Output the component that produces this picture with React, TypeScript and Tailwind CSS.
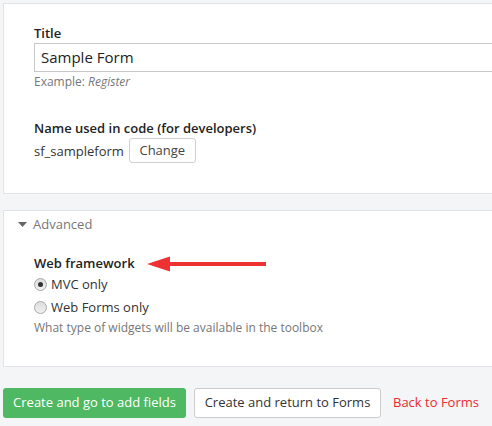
import React from "react";

function Radio({ checked }: { checked?: boolean }) {
  return (
    <span className="w-[13px] h-[13px] rounded-full border border-[#a9a9a9] bg-[linear-gradient(#dcdcdc,#f0f0f0)] flex items-center justify-center shrink-0">
      {checked && <span className="w-[5px] h-[5px] rounded-full bg-[#333]" />}
    </span>
  );
}

export default function App() {
  return (
    <div
      className="w-[492px] h-[426px] overflow-hidden bg-[#f4f5f7] pt-[3px] pl-[3px] text-[#333]"
      style={{ fontFamily: '"Open Sans", sans-serif' }}
    >
      <div className="bg-white border-y border-l border-[#e1e3e6] pt-[20px] pb-[30px] pl-[30px] w-[600px]">
        <div className="text-[13px] leading-[18px] font-semibold text-[#222]">Title</div>
        <div className="mt-[1px] h-[29px] border border-[#c8c8c8] flex items-center pl-[6px] text-[15px] text-[#222]">
          Sample Form
        </div>
        <div className="text-[12px] leading-[17px] text-[#777] mt-[1px]">
          Example: <i>Register</i>
        </div>
        <div className="mt-[29px] text-[13px] leading-[18px] font-semibold text-[#222]">
          Name used in code (for developers)
        </div>
        <div className="flex items-center mt-[1px]">
          <span className="text-[13px] leading-[18px] text-[#333]">sf_sampleform</span>
          <button className="ml-[5px] h-[25px] w-[67px] border border-[#cfcfcf] rounded-[3px] bg-white text-[13px] text-[#444]">
            Change
          </button>
        </div>
      </div>

      <div className="mt-[16px] bg-white border-y border-l border-[#e1e3e6] pt-[4px] pb-[30px] w-[600px]">
        <div className="flex items-center pl-[14px] text-[13px] leading-[18px] text-[#777]">
          <svg width="9" height="5" viewBox="0 0 9 5" className="mr-[6px]">
            <polygon points="0,0 9,0 4.5,5" fill="#666" />
          </svg>
          Advanced
        </div>
        <div className="pl-[30px]">
          <div className="mt-[21px] flex items-center">
            <span className="text-[13px] leading-[18px] font-semibold text-[#222]">Web framework</span>
            <svg width="122" height="16" viewBox="0 0 122 16" className="ml-[12px] mt-[2px]">
              <polygon points="0,8 23,0.5 23,15.5" fill="#ee3232" />
              <rect x="20" y="6" width="99" height="4" fill="#ee3232" />
            </svg>
          </div>
          <div className="mt-[3px] flex items-center gap-[4px] text-[13px] leading-[18px] text-[#333]">
            <Radio checked />
            MVC only
          </div>
          <div className="mt-[5px] flex items-center gap-[4px] text-[13px] leading-[18px] text-[#333]">
            <Radio />
            Web Forms only
          </div>
          <div className="mt-[3px] text-[12px] leading-[17px] text-[#777]">
            What type of widgets will be available in the toolbox
          </div>
        </div>
      </div>

      <div className="mt-[21px] flex items-center">
        <button className="h-[30px] w-[183px] rounded-[3px] bg-[#4fb862] text-white text-[13px]">
          Create and go to add fields
        </button>
        <button className="ml-[8px] h-[30px] w-[187px] rounded-[3px] border border-[#cccccc] bg-white text-[13px] text-[#333]">
          Create and return to Forms
        </button>
        <span className="ml-[12px] text-[13px] text-[#ee2a33]">Back to Forms</span>
      </div>
    </div>
  );
}
